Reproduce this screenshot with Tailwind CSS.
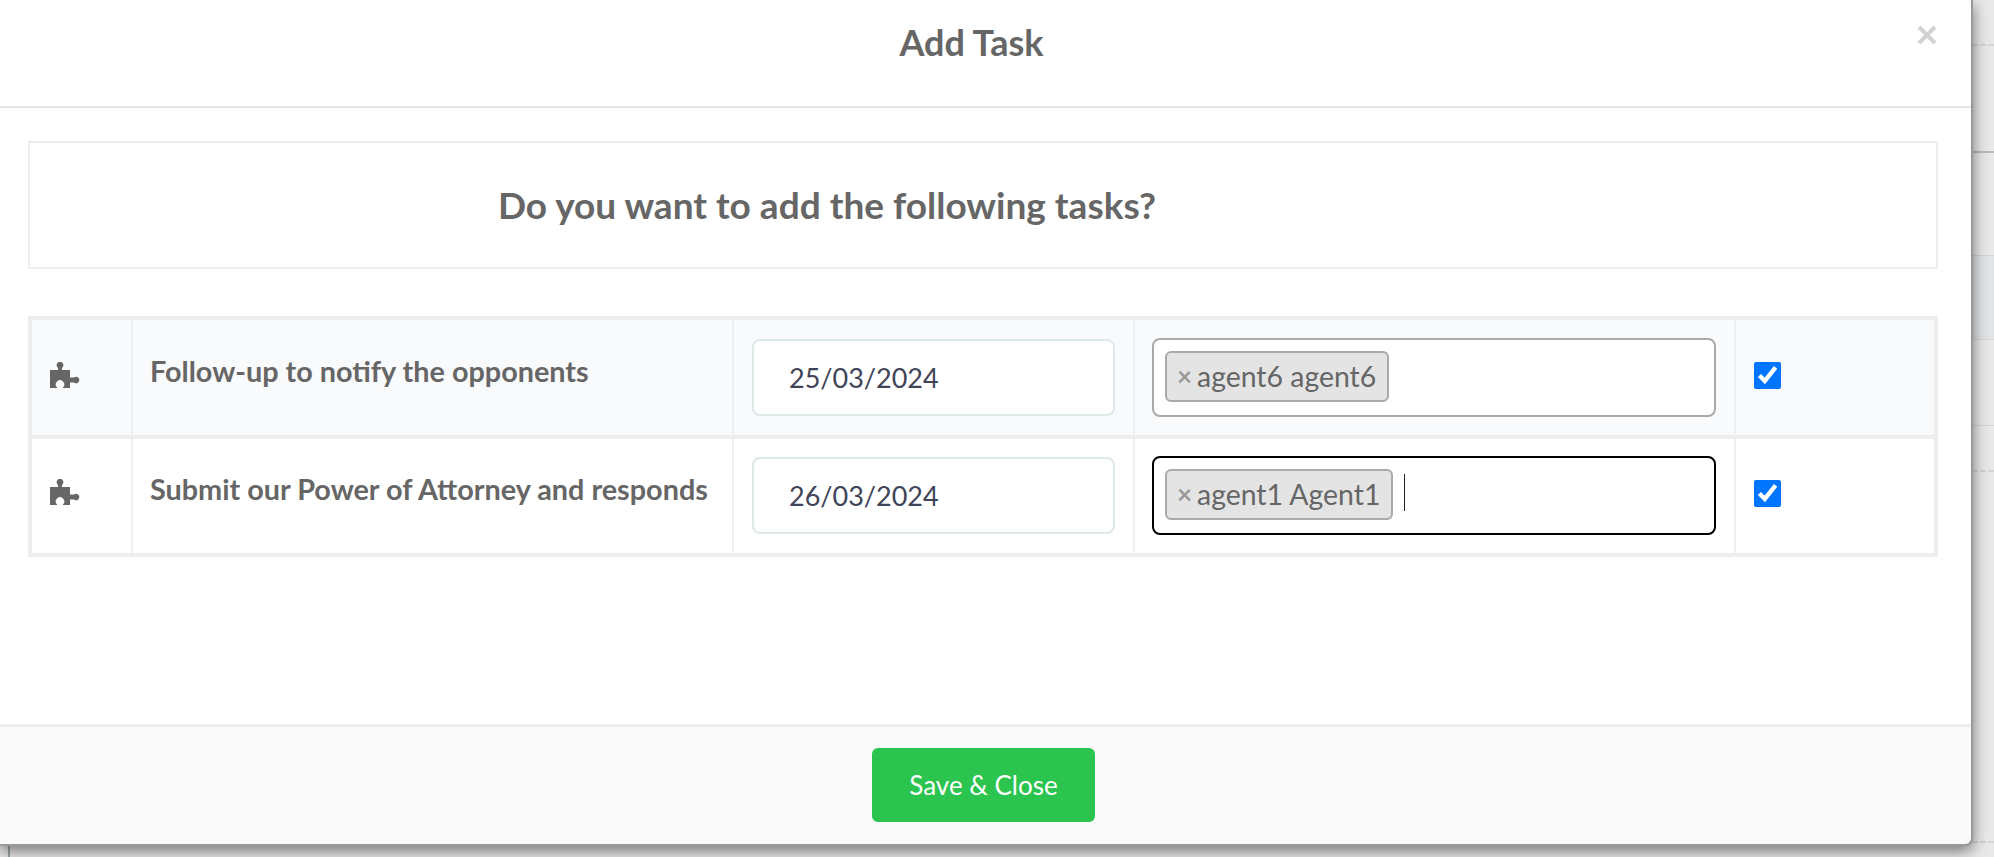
<!DOCTYPE html>
<html lang="en">
  <head>
    <meta charset="UTF-8" />
    <title>Add Task</title>
    <script src="https://cdn.jsdelivr.net/npm/@tailwindcss/browser@4"></script>
  </head>
  <body class="relative h-[857px] w-[1994px] overflow-hidden bg-[#e9e9e9] font-['Lato',sans-serif] text-[#666666]">
    <!-- page behind the modal -->
    <div class="absolute left-[1972px] right-0 top-[44px] border-t-2 border-dashed border-[#d4d4d4]"></div>
    <div class="absolute left-[1972px] right-0 top-[151px] border-t-2 border-[#bbbbbb]"></div>
    <div class="absolute left-[1972px] right-0 top-[255px] h-[85px] border-y border-[#d6d6d6] bg-[#e2e4e6]"></div>
    <div class="absolute left-[1972px] right-0 top-[425px] border-t border-[#d6d6d6]"></div>
    <div class="absolute left-[1972px] right-0 top-[470px] border-t-2 border-dashed border-[#d4d4d4]"></div>
    <div class="absolute left-[1972px] right-0 top-[841px] border-t-2 border-dashed border-[#d4d4d4]"></div>
    <div class="absolute bottom-0 left-[8px] h-[12px] w-[2px] bg-[#9aa3a8]"></div>

    <div class="relative flex h-[846px] w-[1973px] flex-col rounded-br-lg border-r-2 border-b-2 border-[#999999] bg-white shadow-[0_5px_15px_rgba(0,0,0,0.5)]">
      <div class="relative flex h-[108px] shrink-0 items-center justify-center border-b-2 border-[#e5e5e5] pb-[22px] pr-[28px]">
        <h4 class="text-[36px] leading-none font-bold">Add Task</h4>
        <svg class="absolute left-[1917px] top-[25px]" width="20" height="20" viewBox="0 0 20 20">
          <path d="M2 2 L18 18 M18 2 L2 18" stroke="#d2d2d2" stroke-width="4" />
        </svg>
      </div>

      <div class="flex-1 pl-[28px] pt-[33px]">
        <div class="flex h-[128px] w-[1910px] items-center justify-center border-2 border-[#eeeeee] pb-[2px] pr-[312px]">
          <h3 class="text-[37px] leading-none font-bold">Do you want to add the following tasks?</h3>
        </div>

        <div class="mt-[47px] h-[241px] w-[1910px] border-4 border-[#eeeeee]">
          <div class="grid h-[115px] grid-cols-[101px_601px_401px_601px_1fr] border-b-4 border-[#eeeeee] box-content bg-[#f9fafc]">
            <div class="border-r-2 border-[#edeff1] pl-[18px] pt-[42px]">
              <svg width="30" height="26" viewBox="0 0 30 26" fill="#666666">
                <path d="M0 8 H8 V6 A3.4 3.4 0 1 1 12 6 V8 H20 V15.5 H24 A3.2 3.2 0 1 1 24 20.5 H20 V26 H13 V25.5 A4.2 4.2 0 1 0 7 25.5 V26 H0 Z" />
              </svg>
            </div>
            <div class="border-r-2 border-[#edeff1] pl-[17px] pt-[33px] text-[28.8px] leading-[36px] font-bold">Follow-up to notify the opponents</div>
            <div class="border-r-2 border-[#edeff1] pl-[18px] pt-[19px]">
              <input type="text" value="25/03/2024" class="h-[77px] w-[363px] rounded-lg border-2 border-[#dfe8ea] bg-white pl-[35px] text-[27px] text-[#3f4458] outline-none" />
            </div>
            <div class="border-r-2 border-[#edeff1] pl-[17px] pt-[18px]">
              <div class="flex h-[79px] w-[564px] items-start rounded-lg border-2 border-[#aaaaaa] bg-white pl-[11px] pt-[11px]">
                <span class="flex h-[51px] items-center rounded-md border-2 border-[#aaaaaa] bg-[#e4e4e4] pl-[10px] pr-[11px] text-[28.4px]">
                  <span class="mr-[5px] text-[26px] font-bold text-[#999999]">×</span>agent6 agent6
                </span>
              </div>
            </div>
            <div class="pl-[18px] pt-[42px]">
              <input type="checkbox" checked class="m-0 block h-[27px] w-[27px]" />
            </div>
          </div>

          <div class="grid h-[114px] grid-cols-[101px_601px_401px_601px_1fr]">
            <div class="border-r-2 border-[#edeff1] pl-[18px] pt-[40px]">
              <svg width="30" height="26" viewBox="0 0 30 26" fill="#666666">
                <path d="M0 8 H8 V6 A3.4 3.4 0 1 1 12 6 V8 H20 V15.5 H24 A3.2 3.2 0 1 1 24 20.5 H20 V26 H13 V25.5 A4.2 4.2 0 1 0 7 25.5 V26 H0 Z" />
              </svg>
            </div>
            <div class="border-r-2 border-[#edeff1] pl-[17px] pt-[32px] text-[28.8px] leading-[36px] font-bold">Submit our Power of Attorney and responds</div>
            <div class="border-r-2 border-[#edeff1] pl-[18px] pt-[18px]">
              <input type="text" value="26/03/2024" class="h-[77px] w-[363px] rounded-lg border-2 border-[#dfe8ea] bg-white pl-[35px] text-[27px] text-[#3f4458] outline-none" />
            </div>
            <div class="border-r-2 border-[#edeff1] pl-[17px] pt-[17px]">
              <div class="flex h-[79px] w-[564px] items-start rounded-lg border-2 border-black bg-white pl-[11px] pt-[11px]">
                <span class="flex h-[51px] items-center rounded-md border-2 border-[#aaaaaa] bg-[#e4e4e4] pl-[10px] pr-[11px] text-[28.4px]">
                  <span class="mr-[5px] text-[26px] font-bold text-[#999999]">×</span>agent1 Agent1
                </span>
                <span class="ml-[11px] mt-[5px] h-[37px] w-[1px] bg-[#222222]"></span>
              </div>
            </div>
            <div class="pl-[18px] pt-[41px]">
              <input type="checkbox" checked class="m-0 block h-[27px] w-[27px]" />
            </div>
          </div>
        </div>
      </div>

      <div class="flex h-[120px] shrink-0 justify-center rounded-br-lg border-t-[3px] border-[#eeeeee] bg-[#f9f9f9] pr-[4px] pt-[21px]">
        <button class="h-[74px] w-[223px] rounded-md bg-[#2ac44f] text-[26px] text-white">Save &amp; Close</button>
      </div>
    </div>
  </body>
</html>
